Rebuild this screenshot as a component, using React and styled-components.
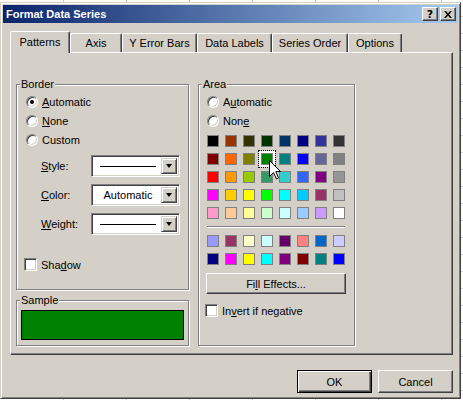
import React from "react";
import styled, { createGlobalStyle } from "styled-components";

const Global = createGlobalStyle`
  html, body { margin: 0; padding: 0; }
  body {
    width: 463px; height: 400px; overflow: hidden;
    background-color: #fff;
    background-image:
      repeating-linear-gradient(to bottom, transparent 0 16px, #d0d0d0 16px 17px),
      repeating-linear-gradient(to right, transparent 0 62px, #c8c8c8 62px 63px);
    background-position: 0 0, 1px 0;
    font-family: "Liberation Sans", Arial, sans-serif;
    font-size: 11px;
    color: #000;
  }
  #root { padding-top: 2px; }
`;

const Window = styled.div`
  width: 461px;
  height: 397px;
  box-sizing: border-box;
  background: #d4d0c8;
  border: 1px solid;
  border-color: #d4d0c8 #404040 #404040 #d4d0c8;
  box-shadow: inset 1px 1px 0 #fff, inset -1px -1px 0 #808080;
  padding: 2px;
  display: flex;
  flex-direction: column;
`;

const TitleBar = styled.div`
  height: 18px;
  flex: none;
  display: flex;
  align-items: center;
  padding: 0 2px 0 3px;
  background: linear-gradient(to right, #0a246a, #a6caf0);
  color: #fff;
  font-weight: bold;
  font-size: 11px;
`;

const TitleText = styled.span`
  flex: 1;
`;

const TitleButtons = styled.div`
  display: flex;
  gap: 2px;
`;

const CaptionButton = styled.div`
  width: 16px;
  height: 14px;
  box-sizing: border-box;
  background: #d4d0c8;
  border: 1px solid;
  border-color: #fff #404040 #404040 #fff;
  box-shadow: inset -1px -1px 0 #808080;
  display: flex;
  align-items: center;
  justify-content: center;
  color: #000;
  font-family: "DejaVu Sans", sans-serif;
  font-weight: bold;
  font-size: 11px;
  line-height: 1;
`;

const Body = styled.div`
  flex: 1;
  display: flex;
  flex-direction: column;
  padding: 8px 4px 0 7px;
`;

const TabStrip = styled.div`
  display: flex;
  align-items: flex-end;
  height: 21px;
  position: relative;
  z-index: 1;
`;

const Tab = styled.div`
  width: ${(p) => p.$w}px;
  height: ${(p) => (p.$active ? 22 : 19)}px;
  margin-bottom: ${(p) => (p.$active ? -1 : 0)}px;
  box-sizing: border-box;
  background: #d4d0c8;
  border-top: 1px solid #fff;
  border-left: 1px solid #fff;
  border-right: 1px solid #404040;
  border-radius: 2px 2px 0 0;
  box-shadow: inset -1px 0 0 #808080;
  display: flex;
  align-items: center;
  justify-content: center;
  padding-bottom: ${(p) => (p.$active ? 2 : 0)}px;
`;

const Panel = styled.div`
  width: 443px;
  height: 303px;
  box-sizing: border-box;
  border: 1px solid;
  border-color: #fff #404040 #404040 #fff;
  box-shadow: inset -1px -1px 0 #808080;
  padding: 31px 0 0 5px;
  display: flex;
  gap: 9px;
  align-items: stretch;
  align-self: flex-start;
`;

const Column = styled.div`
  display: flex;
  flex-direction: column;
  gap: 10px;
  height: 262px;
`;

const Group = styled.div`
  position: relative;
  box-sizing: border-box;
  width: ${(p) => p.$w}px;
  height: ${(p) => p.$h}px;
  border: 1px solid #808080;
  box-shadow: inset 1px 1px 0 #fff, 1px 1px 0 #fff;
  padding: ${(p) => p.$pad || "7px 0 0 9px"};
  display: flex;
  flex-direction: column;
`;

const GroupLabel = styled.span`
  position: absolute;
  top: -7px;
  left: 3px;
  padding: 0 1px;
  line-height: 13px;
  background: #d4d0c8;
`;

const OptionRow = styled.div`
  height: 19px;
  display: flex;
  align-items: center;
  gap: 4px;
  margin-left: ${(p) => p.$ml || 0}px;
  margin-top: ${(p) => p.$mt || 0}px;
`;

const Radio = styled.span`
  width: 12px;
  height: 12px;
  box-sizing: border-box;
  border-radius: 50%;
  background: #fff;
  border: 1px solid;
  border-color: #808080 #fff #fff #808080;
  box-shadow: inset 1px 1px 0 #404040, inset -1px -1px 0 #d4d0c8;
  display: flex;
  align-items: center;
  justify-content: center;
  flex: none;
  &::after {
    content: "";
    width: 4px;
    height: 4px;
    border-radius: 50%;
    background: ${(p) => (p.$checked ? "#000" : "transparent")};
  }
`;

const Check = styled.span`
  width: 13px;
  height: 13px;
  box-sizing: border-box;
  background: #fff;
  border: 1px solid;
  border-color: #808080 #fff #fff #808080;
  box-shadow: inset 1px 1px 0 #404040, inset -1px -1px 0 #d4d0c8;
  flex: none;
`;

const FieldList = styled.div`
  display: flex;
  flex-direction: column;
  gap: 7px;
  margin-top: 6px;
  padding-left: 15px;
`;

const FieldRow = styled.div`
  display: flex;
  align-items: center;
  height: 22px;
`;

const FieldLabel = styled.span`
  width: 50px;
`;

const Combo = styled.div`
  width: 89px;
  height: 22px;
  box-sizing: border-box;
  background: #fff;
  border: 1px solid;
  border-color: #808080 #fff #fff #808080;
  box-shadow: inset 1px 1px 0 #404040, inset -1px -1px 0 #d4d0c8;
  padding: 2px;
  display: flex;
`;

const ComboValue = styled.div`
  flex: 1;
  display: flex;
  align-items: center;
  justify-content: center;
  padding: 0 5px 0 6px;
`;

const LineSample = styled.div`
  flex: 1;
  height: 1px;
  background: #000;
`;

const ComboButton = styled.div`
  width: 16px;
  box-sizing: border-box;
  background: #d4d0c8;
  border: 1px solid;
  border-color: #d4d0c8 #404040 #404040 #d4d0c8;
  box-shadow: inset 1px 1px 0 #fff, inset -1px -1px 0 #808080;
  display: flex;
  align-items: center;
  justify-content: center;
  &::after {
    content: "";
    border-left: 3.5px solid transparent;
    border-right: 3.5px solid transparent;
    border-top: 4px solid #000;
  }
`;

const SampleFill = styled.div`
  width: 163px;
  height: 30px;
  box-sizing: border-box;
  border: 1px solid #000;
  background: #008000;
`;

const SwatchGrid = styled.div`
  display: grid;
  grid-template-columns: repeat(8, 12px);
  grid-auto-rows: 12px;
  gap: 6px;
  margin-top: ${(p) => p.$mt || 0}px;
`;

const Swatch = styled.div`
  position: relative;
  box-sizing: border-box;
  border: 1px solid #808080;
  background: ${(p) => p.$c};
  ${(p) =>
    p.$selected &&
    `outline: 1px dotted #000; outline-offset: 2px; box-shadow: 0 0 0 2px #fff;`}
`;

const Cursor = styled.svg`
  position: absolute;
  left: 7px;
  top: 6px;
  z-index: 2;
`;

const Separator = styled.div`
  width: 138px;
  height: 1px;
  border-bottom: 1px solid #fff;
  background: #808080;
  margin: 7px 0 7px 0;
`;

const PushButton = styled.div`
  width: ${(p) => p.$w}px;
  height: ${(p) => p.$h}px;
  box-sizing: border-box;
  background: #d4d0c8;
  display: flex;
  align-items: center;
  justify-content: center;
  flex: none;
  margin: ${(p) => p.$m || 0};
  border: 1px solid;
  border-color: ${(p) => (p.$default ? "#000" : "#fff #404040 #404040 #fff")};
  box-shadow: ${(p) =>
    p.$default
      ? "inset 1px 1px 0 #fff, inset -1px -1px 0 #404040, inset -2px -2px 0 #808080"
      : "inset -1px -1px 0 #808080"};
`;

const Footer = styled.div`
  display: flex;
  justify-content: flex-end;
  gap: 6px;
  padding: 15px 1px 0 0;
`;

const tabs = [
  ["Patterns", 60],
  ["Axis", 52],
  ["Y Error Bars", 75],
  ["Data Labels", 75],
  ["Series Order", 76],
  ["Options", 54],
];

const palette = [
  "#000000", "#993300", "#333300", "#003300", "#003366", "#000080", "#333399", "#333333",
  "#800000", "#FF6600", "#808000", "#008000", "#008080", "#0000FF", "#666699", "#808080",
  "#FF0000", "#FF9900", "#99CC00", "#339966", "#33CCCC", "#3366FF", "#800080", "#969696",
  "#FF00FF", "#FFCC00", "#FFFF00", "#00FF00", "#00FFFF", "#00CCFF", "#993366", "#C0C0C0",
  "#FF99CC", "#FFCC99", "#FFFF99", "#CCFFCC", "#CCFFFF", "#99CCFF", "#CC99FF", "#FFFFFF",
];
const extra = [
  "#9999FF", "#993366", "#FFFFCC", "#CCFFFF", "#660066", "#FF8080", "#0066CC", "#CCCCFF",
  "#000080", "#FF00FF", "#FFFF00", "#00FFFF", "#800080", "#800000", "#008080", "#0000FF",
];

export default function App() {
  return (
    <>
      <Global />
      <Window>
        <TitleBar>
          <TitleText>Format Data Series</TitleText>
          <TitleButtons>
            <CaptionButton>?</CaptionButton>
            <CaptionButton>
              <svg width="8" height="7" viewBox="0 0 8 7">
                <path d="M0 0h2l2 2.5L6 0h2L5 3.5 8 7H6L4 4.5 2 7H0l3-3.5z" fill="#000" />
              </svg>
            </CaptionButton>
          </TitleButtons>
        </TitleBar>
        <Body>
          <TabStrip>
            {tabs.map(([t, w], i) => (
              <Tab key={t} $w={w} $active={i === 0}>
                {t}
              </Tab>
            ))}
          </TabStrip>
          <Panel>
            <Column>
              <Group $w={173} $h={206}>
                <GroupLabel>Border</GroupLabel>
                <OptionRow>
                  <Radio $checked />
                  <span><u>A</u>utomatic</span>
                </OptionRow>
                <OptionRow>
                  <Radio />
                  <span><u>N</u>one</span>
                </OptionRow>
                <OptionRow>
                  <Radio />
                  <span>Custom</span>
                </OptionRow>
                <FieldList>
                  <FieldRow>
                    <FieldLabel><u>S</u>tyle:</FieldLabel>
                    <Combo>
                      <ComboValue><LineSample /></ComboValue>
                      <ComboButton />
                    </Combo>
                  </FieldRow>
                  <FieldRow>
                    <FieldLabel><u>C</u>olor:</FieldLabel>
                    <Combo>
                      <ComboValue>Automatic</ComboValue>
                      <ComboButton />
                    </Combo>
                  </FieldRow>
                  <FieldRow>
                    <FieldLabel><u>W</u>eight:</FieldLabel>
                    <Combo>
                      <ComboValue><LineSample /></ComboValue>
                      <ComboButton />
                    </Combo>
                  </FieldRow>
                </FieldList>
                <OptionRow $mt={20} $ml={-2}>
                  <Check />
                  <span>Sha<u>d</u>ow</span>
                </OptionRow>
              </Group>
              <Group $w={173} $h={46} $pad="9px 0 0 4px">
                <GroupLabel>Sample</GroupLabel>
                <SampleFill />
              </Group>
            </Column>
            <Group $w={157} $h={262} $pad="7px 0 0 8px">
              <GroupLabel>Area</GroupLabel>
              <OptionRow>
                <Radio />
                <span>A<u>u</u>tomatic</span>
              </OptionRow>
              <OptionRow>
                <Radio />
                <span>Non<u>e</u></span>
              </OptionRow>
              <SwatchGrid $mt={5}>
                {palette.map((c, i) => (
                  <Swatch key={i} $c={c} $selected={i === 11}>
                    {i === 11 && (
                      <Cursor width="13" height="20" viewBox="0 0 13 20">
                        <path
                          d="M0.5 0.5V16.5L4.5 12.5L7.5 19L9.5 18L6.8 11.5H11.5Z"
                          fill="#fff"
                          stroke="#000"
                          strokeWidth="1"
                          strokeLinejoin="miter"
                        />
                      </Cursor>
                    )}
                  </Swatch>
                ))}
              </SwatchGrid>
              <Separator />
              <SwatchGrid>
                {extra.map((c, i) => (
                  <Swatch key={i} $c={c} />
                ))}
              </SwatchGrid>
              <PushButton $w={140} $h={21} $m="8px 0 0 -1px">
                Fi<u>l</u>l Effects...
              </PushButton>
              <OptionRow $mt={7} $ml={-2}>
                <Check />
                <span>In<u>v</u>ert if negative</span>
              </OptionRow>
            </Group>
          </Panel>
          <Footer>
            <PushButton $w={75} $h={23} $default>OK</PushButton>
            <PushButton $w={75} $h={23}>Cancel</PushButton>
          </Footer>
        </Body>
      </Window>
    </>
  );
}
